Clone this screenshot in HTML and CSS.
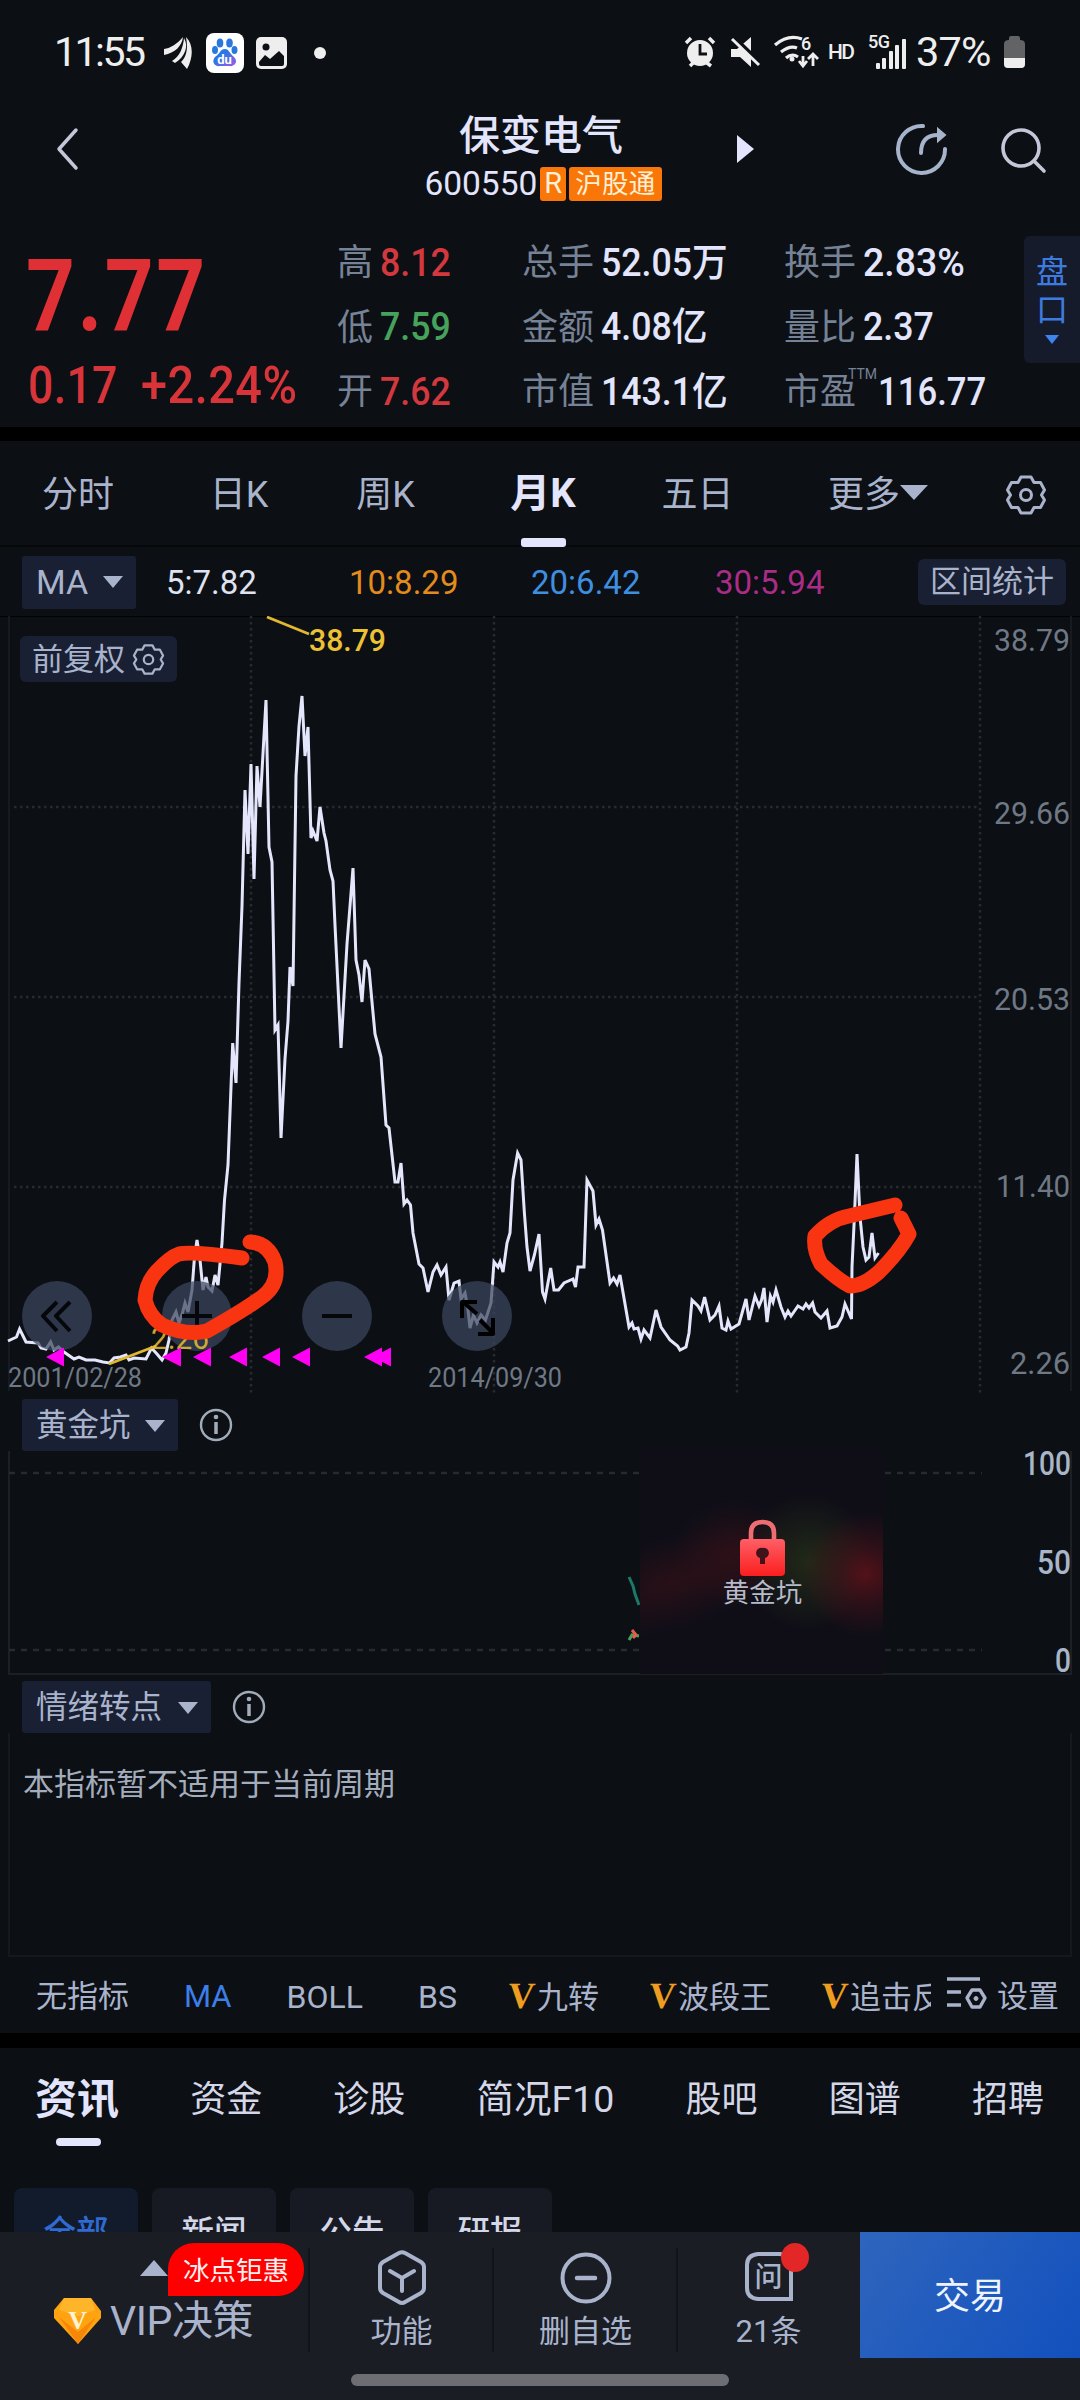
FILE: index.html
```html
<!DOCTYPE html>
<html lang="zh-CN">
<head>
<meta charset="utf-8">
<title>保变电气 600550</title>
<link rel="stylesheet" href="styles.css">
</head>
<body>
<div class="screen">
  <div class="status">
    <span class="clock">11:55</span>
    <svg class="s-wing" width="30" height="34" viewBox="0 0 30 34" fill="#eee"><path d="M1 13C8 12 14 8 20 1C19 10 12 17 1 19Z"/><path d="M9 25C17 20 20 12 21 2C26 10 22 21 12 27Z"/><path d="M23 1C31 9 30 22 24 33L18 26C24 20 25 12 23 1Z"/></svg>
    <svg class="s-du" width="38" height="40" viewBox="0 0 38 40"><defs><linearGradient id="du" x1="0" y1="0" x2="1" y2="1"><stop offset="0.4" stop-color="#2a78e4"/><stop offset="1" stop-color="#a45ae8"/></linearGradient></defs><rect width="38" height="40" rx="8" fill="#fff"/><g fill="#2a78dc"><ellipse cx="14" cy="10" rx="3.3" ry="4.5"/><ellipse cx="23.500" cy="10" rx="3.300" ry="4.500"/><ellipse cx="9" cy="17" rx="3" ry="4"/><ellipse cx="28.500" cy="17" rx="3" ry="4"/></g><path d="M19 16C23 16 24 21 28 24C33 29 28 34 23 33H14C9 34 5 29 9 24C14 21 14 16 19 16Z" fill="url(#du)"/><text x="18.500" y="31" font-size="13" font-weight="700" fill="#fff" text-anchor="middle">du</text></svg>
    <svg class="s-pic" width="31" height="32" viewBox="0 0 31 32"><rect width="31" height="32" rx="5" fill="#eee"/><circle cx="10" cy="10" r="3.500" fill="#0c0f14"/><path d="M3 25L9 18L14 22L23 14L28 19V27Q28 29 26 29H5Q3 29 3 27Z" fill="#0c0f14"/></svg>
    <i class="s-dot"></i>
    <svg class="s-sys" width="256" height="44" viewBox="684 30 256 44" fill="none" stroke="#eee">
      <g><circle cx="700" cy="53" r="13" fill="#eee" stroke="none"/><path d="M686 43L691 38M714 43L709 38M690 66L693 63M711 66L707 63" stroke-width="3.500"/><path d="M700 44V54H707" stroke="#0c0f14" stroke-width="2.800"/></g>
      <path d="M731 49H737L751 37V67L740 57H731Z" fill="#eee" stroke="none"/><path d="M732 36L762 65" stroke="#0c0f14" stroke-width="5"/><path d="M732 39L759 65" stroke-width="3"/>
      <path d="M775 45Q788 34 802 39M781 52Q790 45 797 48M786 58Q792 53 798 57" stroke-width="3.200"/><circle cx="792" cy="59" r="2.500" fill="#eee" stroke="none"/>
      <path d="M803 56V65M799 61L803 66L807 61M813 66V54M808 59L813 54L818 59" stroke-width="2.800"/>
      <g fill="#eee" stroke="none" font-family="Roboto" font-weight="500"><text x="801" y="50" font-size="18">6</text><text x="828" y="59" font-size="21" textLength="27">HD</text><text x="868" y="48" font-size="18" textLength="22">5G</text>
      <rect x="876" y="63" width="4" height="6" rx="1"/><rect x="882" y="58" width="4" height="11" rx="1"/><rect x="889" y="51" width="4" height="18" rx="1"/><rect x="895" y="45" width="4" height="24" rx="1"/><rect x="902" y="39" width="4" height="30" rx="1"/></g>
    </svg>
    <span class="pct">37%</span>
    <svg class="s-bat" width="21" height="32" viewBox="0 0 21 32"><path d="M5 4V2Q5 0 7 0H14Q16 0 16 2V4Q21 4 21 8V28Q21 32 17 32H4Q0 32 0 28V8Q0 4 5 4Z" fill="#626365"/><path d="M0 22H21V28Q21 32 17 32H4Q0 32 0 28Z" fill="#eee"/></svg>
  </div>

  <header class="head">
    <svg class="back" width="24" height="44" viewBox="0 0 24 44"><path d="M20 3L3 22L20 41" fill="none" stroke="#c4c7d8" stroke-width="3.500" stroke-linecap="round" stroke-linejoin="round"/></svg>
    <div class="stock">
      <h1>保变电气</h1>
      <div class="code"><span>600550</span><b>R</b><b class="wide">沪股通</b></div>
    </div>
    <svg class="next" width="17" height="28" viewBox="0 0 17 28"><path d="M0 0L17 14L0 28Z" fill="#e2e5fb"/></svg>
    <svg class="share" width="52" height="54" viewBox="0 0 52 54" fill="none" stroke="#a5b4ca" stroke-width="4" stroke-linecap="round"><path d="M27 4A23.500 23.500 0 1 0 49 27M25 31Q25 13 42 13"/><path d="M42 7L49 13L42 19Z" fill="#a5b4ca" stroke-width="2"/></svg>
    <svg class="search" width="46" height="46" viewBox="0 0 46 46" fill="none" stroke="#c4c7d8" stroke-width="3.600" stroke-linecap="round"><circle cx="20" cy="20" r="18"/><path d="M33 33L43 43"/></svg>
  </header>

  <section class="quote">
    <div class="price"><div class="last"><span>7.77</span></div><div class="delta"><span>0.17</span><span class="chg">+2.24%</span></div></div>
    <dl class="col c1"><div><dt>高</dt><dd class="up">8.12</dd></div><div><dt>低</dt><dd class="down">7.59</dd></div><div><dt>开</dt><dd class="up">7.62</dd></div></dl>
    <dl class="col c2"><div><dt>总手</dt><dd>52.05万</dd></div><div><dt>金额</dt><dd>4.08亿</dd></div><div><dt>市值</dt><dd>143.1亿</dd></div></dl>
    <dl class="col c3"><div><dt>换手</dt><dd class="rate">2.83%</dd></div><div><dt>量比</dt><dd>2.37</dd></div><div><dt>市盈<sup>TTM</sup></dt><dd class="pe">116.77</dd></div></dl>
    <div class="depth"><span>盘</span><span>口</span><i></i></div>
  </section>

  <nav class="periods">
    <span>分时</span><span>日K</span><span>周K</span><span class="on">月K</span><span>五日</span><span>更多<i class="tri"></i></span>
    <svg width="42" height="42" viewBox="-21 -21 42 42" fill="none" stroke="#a9b4cc" stroke-width="3"><path d="M-5 -18H5L8 -12.500L14.500 -12.500L18.500 -5L15.500 0L18.500 5L14.500 12.500H8L5 18H-5L-8 12.500H-14.500L-18.500 5L-15.500 0L-18.500 -5L-14.500 -12.500H-8Z" stroke-linejoin="round"/><circle r="5.500"/></svg>
  </nav>

  <div class="mabar">
    <span class="pick">MA<i class="tri"></i></span>
    <span class="m5">5:7.82</span><span class="m10">10:8.29</span><span class="m20">20:6.42</span><span class="m30">30:5.94</span>
    <span class="range">区间统计</span>
  </div>

  <section class="chart">
    <svg width="1080" height="783" viewBox="0 616 1080 783">
      <g fill="none" stroke="#171b21" stroke-width="2"><path d="M0 616H1080" stroke="#020305"/><path d="M9 616V1391M1071 616V1391"/></g>
      <g fill="none" stroke="#272a2f" stroke-width="2.500" stroke-dasharray="2.500 3.500"><path d="M251 616V1393M494 616V1393M737 616V1393M980 616V1393M14 807H980M14 997H980M14 1187H980"/></g>
      <polyline fill="none" stroke="#e4e7fb" stroke-width="3" stroke-linejoin="miter" points="8,1341 16.500,1337 19.600,1329 26,1342 38,1343 41,1348 46,1349 50.600,1342 54,1350 58.500,1347 64,1352 74,1359 79,1357 86,1360 95,1360 103,1362 109.500,1363 114,1358 120.500,1357 126,1355 129,1360 134,1358 146,1359 151.500,1348 157,1354 162,1360 166,1353 169,1340 172,1320 176,1312 179,1323 182.500,1313 185,1303 188,1312 192,1290 194.500,1257 197,1240 200,1260 203,1290 206,1277 208,1287 212,1291 215,1275 218,1285 222,1243 224.500,1200 228,1165 232.700,1043 236,1083 239,983 242,906 245,790 248,854 251,764 254,879 257,766 260,807 266,700 269,847 272,862 275,1030 278,1025 281,1138 285,1059 288,1021 290,967 293,986 296,776 299,726 302,696 305,756 308,727 311,838 313,831 317,841 320,807 324,833 326,841 330,870 333,881 335,925 341,1048 347,944 350,906 353,868 356,960 359,975 362,1002 365,960 369,969 372,1002 375,1034 381,1057 386,1125 389,1128 395,1182 398,1182 401,1163 404,1204 407,1200 410.500,1205 413,1233 419,1264 423,1268 428,1292 433,1272 437,1265 441,1275 446,1267 449,1300 454,1283 459,1281 461,1299 465,1293 468,1310 470,1328 473.500,1315 477,1323 481,1315 485.500,1320 491,1303 494,1262 498,1267 500,1262 503,1272 507,1243 510,1233 513,1180 517.600,1153 521,1160 524.400,1213 527,1247 530,1271 534.400,1255 539,1234 542.500,1292 545,1299 550.700,1268 554,1290 558.500,1290 564,1283 573,1279 575.500,1287 578,1267 584,1267 587,1180 593,1191 596,1225 599,1219 602.500,1230 610,1283 613.600,1278 617,1284 620,1275 629,1327 632,1323 634,1329 638,1328 641,1339 644,1330 650,1338 656,1310 661,1327 670,1340 677.600,1346 680,1350 686,1347 689,1333 692,1300 698,1306 701,1311 704.600,1297 710,1320 715,1315 719,1306 722,1328 726,1330 728,1321 731,1329 739,1324 746,1299 749,1320 755,1296 759,1306 761.500,1300 764,1288 767,1322 770.400,1296 773,1302 776,1290 781,1307 785,1317 788,1311 791,1316 798,1306 803,1309 806,1304 809,1308 812.600,1303 815,1312 821,1318 827,1311 830,1328 837,1326 842,1317 845,1304 851.500,1319 852,1267 854.400,1217 857,1154 860,1217 863,1247 866,1260 869,1257 872,1233 875,1258 878.500,1253"/>
      <g fill="#6f7885" text-anchor="end" font-size="32" class="din"><text x="1070" y="651" textLength="76" lengthAdjust="spacingAndGlyphs">38.79</text><text x="1070" y="824" textLength="76" lengthAdjust="spacingAndGlyphs">29.66</text><text x="1070" y="1010" textLength="76" lengthAdjust="spacingAndGlyphs">20.53</text><text x="1070" y="1197" textLength="74" lengthAdjust="spacingAndGlyphs">11.40</text><text x="1070" y="1374" textLength="60" lengthAdjust="spacingAndGlyphs">2.26</text></g>
      <g fill="#6f7885" font-size="27" class="din"><text x="8" y="1387" textLength="134" lengthAdjust="spacingAndGlyphs">2001/02/28</text><text x="428" y="1387" textLength="134" lengthAdjust="spacingAndGlyphs">2014/09/30</text></g>
      <g fill="#3c475e" fill-opacity=".72"><circle cx="57" cy="1316" r="35"/><circle cx="197" cy="1316" r="35"/><circle cx="337" cy="1316" r="35"/><circle cx="477" cy="1316" r="35"/></g>
      <g stroke="#e2b830" stroke-width="2.800"><path d="M267 617L309 634M109 1364L156 1346"/></g>
      <g class="din" fill="#ecc134" font-weight="500"><text x="309" y="651" font-size="31" textLength="77" lengthAdjust="spacingAndGlyphs">38.79</text><text x="151" y="1349" font-size="31" font-weight="400" fill-opacity=".85" textLength="58" lengthAdjust="spacingAndGlyphs">2.26</text></g>
      <g fill="none" stroke="#05070b" stroke-width="4" stroke-linejoin="round"><path d="M57 1302L43 1316L57 1331M70 1302L56 1316L70 1331M197 1301V1332M182 1316H212M322 1316H352"/><path d="M477 1314L463 1302M462 1318V1302H477M480 1320L493 1333M493 1318V1334H478" stroke="#000"/></g>
      <g fill="#ff00f5"><path d="M46 1357L64 1347.500V1366.500ZM162 1357L181 1347.500V1366.500ZM193 1357L211 1347.500V1366.500ZM229 1357L247 1347.500V1366.500ZM262 1357L280 1347.500V1366.500ZM292 1357L310 1347.500V1366.500ZM364 1357L382 1347.500V1366.500ZM373 1357L391 1347.500V1366.500Z"/></g>
      <g fill="none" stroke="#f83411" stroke-width="15" stroke-linecap="round" stroke-linejoin="round"><path d="M250 1242Q268 1243 275 1262Q280 1284 262 1297Q243 1311 207 1331Q186 1336 162 1325Q149 1316 145 1300Q146 1283 157 1271Q170 1257 179 1254Q191 1251 242 1258"/><path d="M901 1218L909 1234Q899 1252 879 1272Q863 1286 850 1286Q838 1280 821 1264Q813 1249 815 1236Q829 1220 849 1216L895 1205"/></g>
    </svg>
    <span class="adjust">前复权<svg width="33" height="33" viewBox="-21 -21 42 42" fill="none" stroke="#a9b4cc" stroke-width="2.800"><path d="M-5 -18H5L8 -12.500L14.500 -12.500L18.500 -5L15.500 0L18.500 5L14.500 12.500H8L5 18H-5L-8 12.500H-14.500L-18.500 5L-15.500 0L-18.500 -5L-14.500 -12.500H-8Z" stroke-linejoin="round"/><circle r="6"/></svg></span>
  </section>

  <div class="indbar gold"><span class="pick">黄金坑<i class="tri"></i></span><svg width="34" height="34" viewBox="0 0 34 34" fill="none" stroke="#a1acba"><circle cx="17" cy="17" r="15" stroke-width="2.400"/><path d="M17 14V26" stroke-width="3.500"/><circle cx="17" cy="9" r="2.300" fill="#a1acba" stroke="none"/></svg></div>
  <section class="pit">
    <svg width="1080" height="226" viewBox="0 1449 1080 226">
      <defs><radialGradient id="r1"><stop offset="0" stop-color="#6b1219" stop-opacity=".75"/><stop offset=".5" stop-color="#55121a" stop-opacity=".4"/><stop offset="1" stop-color="#55121a" stop-opacity="0"/></radialGradient><radialGradient id="g1"><stop offset="0" stop-color="#2c3b18" stop-opacity=".6"/><stop offset="1" stop-color="#2c3b18" stop-opacity="0"/></radialGradient><radialGradient id="r2"><stop offset="0" stop-color="#3a1118" stop-opacity=".6"/><stop offset="1" stop-color="#3a1118" stop-opacity="0"/></radialGradient><linearGradient id="lk" x1="0" y1="0" x2="0" y2="1"><stop offset="0" stop-color="#ff5f66"/><stop offset="1" stop-color="#fb1e1e"/></linearGradient><clipPath id="pane"><rect x="640" y="1449" width="243" height="225"/></clipPath></defs>
      <path d="M9 1451V1674H1071V1451" fill="none" stroke="#1b1f26" stroke-width="2"/>
      <path d="M9 1473H982M9 1650H982" stroke="#272a2f" stroke-width="2.500" stroke-dasharray="6 6"/>
      <path d="M629 1577L633 1586L635 1594L639 1605" fill="none" stroke="#1d7868" stroke-width="3"/><path d="M629 1640L632 1635L639 1636" fill="none" stroke="#48a25a" stroke-width="3"/><path d="M632 1630L636 1635L633 1638" fill="none" stroke="#e95a4f" stroke-width="3"/>
      <g clip-path="url(#pane)"><rect x="640" y="1449" width="243" height="225" fill="#0f0e17"/><ellipse cx="675" cy="1582" rx="120" ry="46" transform="rotate(-17 675 1582)" fill="url(#r2)"/><ellipse cx="735" cy="1552" rx="60" ry="52" fill="url(#r2)"/><ellipse cx="808" cy="1562" rx="64" ry="68" fill="url(#g1)"/><ellipse cx="866" cy="1574" rx="64" ry="62" fill="url(#r1)"/></g>
      <path d="M751 1541V1533Q751 1522 762.500 1522Q774 1522 774 1533V1541" fill="none" stroke="#ee6d72" stroke-width="4.600"/><rect x="740" y="1539" width="45" height="37" rx="4" fill="url(#lk)"/><path d="M762.500 1548A5 5 0 0 1 765 1558V1564H760V1558A5 5 0 0 1 762.500 1548Z" fill="#41131a"/>
      <text x="762.500" y="1602" font-size="26.500" fill="#b6bbca" text-anchor="middle">黄金坑</text>
      <g class="din" fill="#a9b5c8" font-size="33" font-weight="500" text-anchor="end"><text x="1071" y="1475" textLength="48" lengthAdjust="spacingAndGlyphs">100</text><text x="1071" y="1574" textLength="34" lengthAdjust="spacingAndGlyphs">50</text><text x="1071" y="1672" textLength="16" lengthAdjust="spacingAndGlyphs">0</text></g>
    </svg>
  </section>
  <div class="indbar mood"><span class="pick">情绪转点<i class="tri"></i></span><svg width="34" height="34" viewBox="0 0 34 34" fill="none" stroke="#a1acba"><circle cx="17" cy="17" r="15" stroke-width="2.400"/><path d="M17 14V26" stroke-width="3.500"/><circle cx="17" cy="9" r="2.300" fill="#a1acba" stroke="none"/></svg></div>
  <div class="note">本指标暂不适用于当前周期</div>

  <div class="inds">
    <div class="scroll"><span>无指标</span><span class="sel">MA</span><span>BOLL</span><span>BS</span><span><b>V</b>九转</span><span><b>V</b>波段王</span><span><b>V</b>追击反</span></div>
    <svg width="40" height="36" viewBox="0 0 40 36" fill="none" stroke="#a9b4cc" stroke-width="3.400"><path d="M0 3H33M0 16H14M0 29H14"/><path d="M25 14H33L38 22L33 31H25L20 22Z" stroke-linejoin="round"/><circle cx="29" cy="22.500" r="2" fill="#a9b4cc" stroke-width="1"/></svg>
    <span class="set">设置</span>
  </div>

  <section class="news">
    <nav><span class="on">资讯</span><span>资金</span><span>诊股</span><span class="f10">简况F10</span><span>股吧</span><span>图谱</span><span>招聘</span></nav>
    <div class="chips"><span class="on">全部</span><span>新闻</span><span>公告</span><span>研报</span></div>
  </section>

  <footer class="dock">
    <div class="bar">
      <div class="vip">
        <div class="promo"><i></i><span>冰点钜惠</span></div>
        <div class="viptext"><svg width="47" height="46" viewBox="0 0 47 46"><path d="M10 0H37L47 13V20L24 46L0 20V12Z" fill="#ffa311"/><path d="M10 0H37L41 12L24 18L5 12Z" fill="#ffb52a"/><path d="M5 19L24 46L42 19L24 34Z" fill="#f78708"/><text x="23.500" y="31" font-family="Liberation Serif" font-weight="700" font-size="26" fill="#fff3d2" text-anchor="middle">V</text></svg>VIP决策</div>
      </div>
      <div class="item"><svg width="50" height="56" viewBox="0 0 50 56" fill="none" stroke="#a9b4cc" stroke-width="4" stroke-linejoin="round" stroke-linecap="round"><path d="M22 3Q25 1.500 28 3L44 12Q47 14 47 17V38Q47 41 44 43L28 52Q25 54 22 52L6 43Q3 41 3 38V17Q3 14 6 12Z"/><path d="M13 21L25 28L37 21M25 28V41"/></svg><span>功能</span></div>
      <div class="item"><svg width="52" height="56" viewBox="0 0 52 56" fill="none" stroke="#a9b4cc" stroke-width="4" stroke-linecap="round"><circle cx="26" cy="28" r="23.500"/><path d="M17 28H35" stroke-width="4.500"/></svg><span>删自选</span></div>
      <div class="item ask"><svg width="50" height="56" viewBox="0 0 50 56"><path d="M14 4H36Q47 5 47 15V49H14Q3 48 3 38V15Q3 5 14 4Z" fill="none" stroke="#a9b4cc" stroke-width="4"/><text x="24.500" y="37" font-size="28" font-weight="500" fill="#a9b4cc" text-anchor="middle">问</text></svg><i></i><span>21条</span></div>
      <div class="trade">交易</div>
    </div>
    <div class="home"></div>
  </footer>
</div>
</body>
</html>
```

FILE: styles.css
```css
* { box-sizing: border-box; }
body { margin: 0; background: #0c0f14; font-family: Roboto, "Noto Sans CJK SC", sans-serif; color: #a9b4cc; }
svg { display: block; flex: none; }
h1, dl, dd { margin: 0; }
.screen { width: 1080px; height: 2400px; overflow: hidden; display: flex; flex-direction: column; line-height: 1; white-space: nowrap; }
.screen > * { flex: none; }
.din { font-family: Roboto, sans-serif; }

.status { height: 104px; display: flex; align-items: center; padding-left: 54px; color: #eee; }
.clock { font-size: 41px; width: 109px; letter-spacing: -2.5px; }
.s-wing { margin-top: 2px; }
.s-du { margin-left: 13px; margin-top: 2px; }
.s-pic { margin-left: 12px; margin-top: 1px; }
.s-dot { width: 12px; height: 12px; border-radius: 50%; background: #eee; margin: 1px 0 0 27px; }
.s-sys { margin-left: 358px; }
.pct { font-size: 41.5px; margin-left: -24px; width: 88px; letter-spacing: -.8px; }
.s-bat { margin-left: 0; margin-top: -1px; }

.head { height: 120px; display: flex; align-items: flex-start; padding-left: 56px; color: #e2e5fb; }
.back { margin-top: 23px; }
.stock { width: 240px; margin-left: 341px; display: flex; flex-direction: column; align-items: center; }
h1 { font-size: 41px; font-weight: 500; line-height: 60px; padding-top: 2px; height: 60px; }
.code { display: flex; align-items: center; gap: 3px; font-size: 33.5px; height: 39px; margin-left: 4px; }
.code b { height: 34px; line-height: 33px; background: #f97708; color: #ffefd5; border-radius: 3px; font-weight: 400; font-size: 29px; padding: 0 4px; }
.code b.wide { font-size: 26.500px; padding: 0 6px; letter-spacing: .3px; }
.next { margin: 31px 0 0 76px; }
.share { margin: 18px 0 0 142px; }
.search { margin: 24px 0 0 53px; }

.quote { height: 217px; border-bottom: 14px solid #000; display: flex; position: relative; color: #e2e5fb; }
.price { width: 337px; padding: 20px 0 0 28px; color: #df3036; }
.last { height: 102px; font-size: 101px; font-weight: 700; line-height: 102px; margin-top: 1px; }
.last span { display: inline-block; transform: scaleX(.845); transform-origin: 0 0; letter-spacing: 3px; margin-left: -2px; }
.delta { display: flex; gap: 10px; font-size: 51px; font-weight: 500; line-height: 60px; margin-top: 9px; height: 60px; color: #d8353b; }
.delta span { transform: scaleX(.87); transform-origin: 0 0; letter-spacing: .5px; }
.delta .chg { transform: scaleX(.92); }
.col { padding-top: 7px; }
.c1 { width: 185px; } .c2 { width: 262px; }
.col > div { display: flex; height: 64.500px; align-items: center; font-size: 36px; }
.col dt { color: #768296; position: relative; }
.col dd { margin-left: 7px; font-size: 39px; font-weight: 500; transform: scaleX(.915); transform-origin: 0 50%; }
.col dd.rate { transform: scaleX(.96); }
.col dd.pe { margin-left: 22px; transform: scaleX(.89); }
.up { color: #d2383e; } .down { color: #47a35c; }
sup { position: absolute; left: 64px; top: -7px; font-size: 14px; line-height: 14px; }
.depth { position: absolute; left: 1024px; top: 12px; width: 56px; height: 127px; background: #151b2a; border-radius: 6px 0 0 6px; display: flex; flex-direction: column; align-items: center; padding: 20px 0 0 0; gap: 6px; font-size: 32px; color: #3d7be0; }
.depth i { border: 7px solid transparent; border-top: 9px solid #3d85ee; border-bottom: 0; margin-top: 3px; }

.periods { height: 106px; display: grid; grid-template-columns: 156px 166px 127px 190px 117px 244px 52px; justify-items: center; align-items: center; font-size: 36px; border-bottom: 2px solid #050709; padding-top: 2px; }
.periods .on { font-size: 40px; font-weight: 700; color: #e2e5fb; height: 104px; line-height: 102px; position: relative; left: -1px; }
.periods .on::after { content: ""; position: absolute; left: 50%; margin-left: -22.500px; bottom: 0; width: 45px; height: 9px; border-radius: 3px; background: #e2e5fb; }
.tri { display: inline-block; border: 10px solid transparent; border-top: 12px solid #a9b4cc; border-bottom: 0; }
.periods .tri { border-width: 15px 14px 0; vertical-align: 7px; }

.mabar { height: 69px; display: grid; grid-template-columns: 144px 183px 182px 184px 203px 148px; align-items: center; padding-left: 22px; font-size: 33px; padding-top: 1px; }
.pick { background: #192033; border-radius: 3px; height: 53px; padding-left: 14px; padding-right: 13px; display: flex; align-items: center; gap: 14px; width: max-content; }
.mabar .pick { font-size: 34px; gap: 15px; }
.m5 { color: #dfe2f0; } .m10 { color: #e38b1d; } .m20 { color: #3f8fe0; } .m30 { color: #ab2c86; }
.range { background: #192033; border-radius: 6px; height: 46px; line-height: 46px; text-align: center; font-size: 31px; }

.chart { position: relative; height: 783px; }
.adjust { position: absolute; left: 20px; top: 20px; height: 46px; width: 157px; background: #192033; border-radius: 6px; display: flex; align-items: center; padding: 1px 0 0 12px; gap: 7px; font-size: 31px; }
.indbar { display: flex; align-items: center; gap: 21px; padding-left: 22px; height: 52px; font-size: 31.500px; }
.indbar .pick { height: 52px; padding-top: 1px; }
.gold { height: 52px; }
.pit { height: 228px; margin-top: -2px; }
.mood { margin-top: 4px; }
.mood .pick { gap: 16px; }
.note { height: 224px; margin: 0 8px; border: 2px solid #15191f; border-top: 0; padding: 36px 0 0 13px; font-size: 31px; color: #a3adbd; }

.inds { height: 91px; border-bottom: 15px solid #000; display: flex; align-items: center; font-size: 31px; padding-left: 36px; padding-top: 3px; }
.scroll { width: 895px; overflow: hidden; display: flex; gap: 50px; height: 50px; align-items: center; }
.scroll span:nth-child(-n+4) { margin-right: 5px; }
.scroll span:nth-child(3) { font-size: 32px; }
.scroll span:nth-child(4) { margin-right: 1px; font-size: 32px; }
.sel { color: #3d7ee8; }
.scroll b { display: inline-block; width: 29px; font-family: "Liberation Serif", serif; font-size: 37px; color: #ee9d20; line-height: 30px; transform: skewX(-5deg); }
.inds > svg { margin-left: 16px; margin-top: -6px; }
.set { margin-left: 10px; }

.news { height: 184px; overflow: hidden; }
.news nav { height: 100px; display: flex; justify-content: space-between; align-items: center; padding: 4px 36px 0 35px; font-size: 36px; color: #d4d7e8; }
.news .on { position: relative; }
.news nav .on { font-size: 42px; font-weight: 700; color: #e2e5fb; }
.news nav .f10 { font-size: 37.5px; }
.news nav .on::after { content: ""; position: absolute; left: 21px; top: 59px; width: 45px; height: 8px; border-radius: 4px; background: #e2e5fb; }
.chips { display: flex; gap: 14px; padding: 40px 0 0 14px; }
.chips span { width: 124px; height: 84px; border-radius: 8px; background: #171a22; text-align: center; line-height: 91px; font-size: 32.500px; color: #d4d7e8; font-weight: 500; }
.chips .on { background: #121b2c; color: #2f6bd2; }

.dock { height: 168px; background: #1b1d25; position: relative; }
.bar { display: grid; grid-template-columns: 310px 184px 184px 182px 220px; grid-template-rows: 126px; height: 126px; }
.vip, .item { position: relative; }
.vip::after, .item:nth-child(-n+3)::after { content: ""; position: absolute; right: 0; top: 16px; width: 2px; height: 104px; background: #12141a; }
.promo { display: flex; padding: 11px 0 0 140px; }
.promo i { border: 14px solid transparent; border-bottom: 16px solid #a9b4cc; border-top: 0; height: 16px; margin-top: 17px; }
.promo span { width: 136px; height: 53px; border-radius: 26px 26px 26px 0; background: #fe0000; color: #fff0f0; font-size: 26.500px; line-height: 56px; text-align: center; }
.viptext { display: flex; align-items: center; gap: 9px; margin: 0 0 0 54px; height: 50px; font-size: 41px; letter-spacing: -.4px; }
.item { display: flex; flex-direction: column; align-items: center; padding-top: 18px; font-size: 31px; padding-right: 1px; }
.item span { margin-top: 10px; }
.ask i { position: absolute; left: 103px; top: 11px; width: 28px; height: 29px; border-radius: 50%; background: #e32626; }
.trade { background: linear-gradient(125deg, #2e65bd, #1250bd); color: #eef4ff; font-size: 36px; line-height: 130px; height: 126px; overflow: hidden; padding-left: 74px; }
.home { position: absolute; left: 351px; top: 142px; width: 378px; height: 12px; border-radius: 6px; background: #6d6e73; }
```
